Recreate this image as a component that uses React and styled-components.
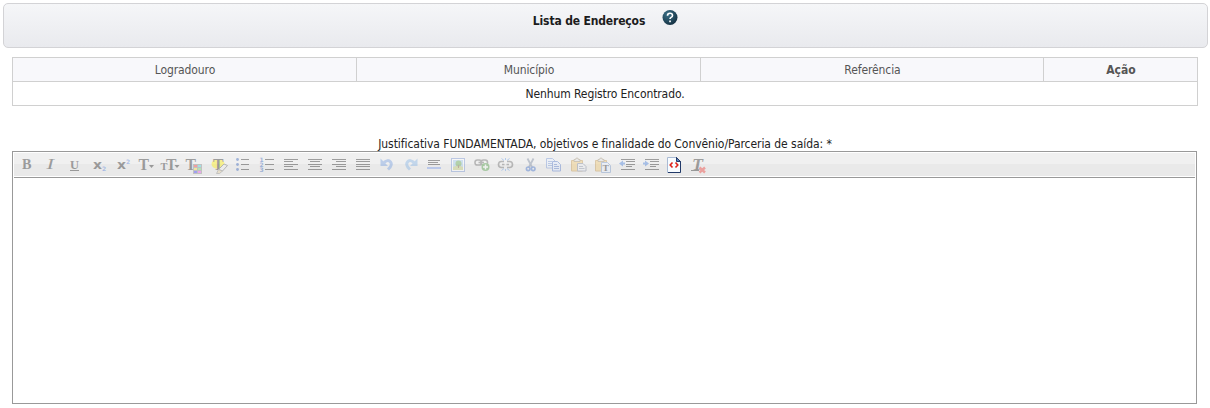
import React from 'react';
import styled, { createGlobalStyle } from 'styled-components';

const GlobalStyle = createGlobalStyle`
  body { margin: 0; background: #fff; }
  * { box-sizing: border-box; }
`;

const Page = styled.main`
  height: 408px;
  padding: 3px 2px 0 3px;
  overflow: hidden;
  font: 12px/14px 'DejaVu Sans Condensed', 'DejaVu Sans', sans-serif;
  font-stretch: condensed;
  color: #222;
`;

const Header = styled.header`
  display: flex;
  justify-content: center;
  align-items: flex-start;
  gap: 17px;
  height: 45px;
  padding-top: 6px;
  border: 1px solid #d3d3d6;
  border-radius: 5px;
  background: linear-gradient(#f5f6f8, #e9eaee);
`;

const Title = styled.h1`
  margin: 4px 0 0;
  font-size: 12px;
  line-height: 14px;
  font-weight: bold;
  letter-spacing: ${(p) => p.$spacing};
  color: #1c1c1c;
  white-space: nowrap;
`;

const Table = styled.table`
  width: 1186px;
  margin: 9px 0 0 9px;
  border-collapse: collapse;
  table-layout: fixed;
`;

const HeadCell = styled.th`
  height: 24px;
  padding: 0 0 0 1px;
  border: 1px solid #d0d0d0;
  background: #f8f8fb;
  color: #555;
  font-weight: ${(p) => (p.$bold ? 'bold' : 'normal')};
  letter-spacing: ${(p) => p.$spacing || 'normal'};
  text-align: center;
`;

const Cell = styled.td`
  height: 24px;
  padding: 0;
  border: 1px solid #d0d0d0;
  text-align: center;
  letter-spacing: ${(p) => p.$spacing};
`;

const Label = styled.label`
  display: block;
  width: 1186px;
  margin: 31px 0 0 9px;
  height: 14px;
  text-align: center;
  letter-spacing: ${(p) => p.$spacing};
  white-space: nowrap;
`;

const Editor = styled.section`
  display: flex;
  flex-direction: column;
  width: 1185px;
  height: 253px;
  margin-left: 9px;
  padding: 1px;
  border: 1px solid #999;
`;

const Toolbar = styled.div`
  display: flex;
  height: 25px;
  padding-bottom: 1px;
  border-bottom: 1px solid #999;
  background: linear-gradient(#f0f0f0 11px, #e9e9e9 11px) content-box;
`;

const Tool = styled.button`
  width: 24px;
  height: 23px;
  padding: 0;
  border: 0;
  background: none;
  opacity: ${(p) => (p.$active ? 1 : 0.4)};
  svg { display: block; overflow: visible; }
`;

const Body = styled.div`
  flex: 1;
`;

const DARK = '#222';
const BLUE = '#4577dc';

const Glyph = ({ x, y, size = 14, width, family = 'Liberation Serif', color = DARK, weight = 'bold', italic, children }) => (
  <text
    x={x}
    y={y}
    fontFamily={family}
    fontSize={size}
    fontWeight={weight}
    fontStyle={italic ? 'italic' : 'normal'}
    textLength={width}
    lengthAdjust="spacingAndGlyphs"
    letterSpacing="0"
    fill={color}
  >
    {children}
  </text>
);

const BigT = ({ x, y = 6 }) => <Glyph x={x} y={y + 11} size={16.5} width={10.5}>T</Glyph>;
const Arrow = ({ x }) => <path d={`M${x} 12h5l-2.500 3z`} fill={DARK} />;
const Bars = ({ rows, color = '#222' }) =>
  rows.map(([x, y, w]) => <rect key={`${x}-${y}`} x={x} y={y} width={w} height="1" fill={color} />);

const Clipboard = () => (
  <g>
    <path d="M5.500 7.500h11v10.500h-11z" fill="#efc56c" stroke="#c09040" />
    <path d="M8 8.500V6.500h1.500q0-1.500 1.500-1.500t1.500 1.500h1.500v2z" fill="#ddd" stroke="#8a7752" strokeWidth=".8" />
  </g>
);

const Chain = () => (
  <g fill="none" stroke="#666" strokeWidth="1.600">
    <rect x="5" y="7" width="6.500" height="5" rx="2.300" />
    <rect x="11" y="7" width="6.500" height="5" rx="2.300" />
    <path d="M8.500 9.500h5.500" />
  </g>
);

const IndentBars = () => (
  <Bars rows={[[7, 6, 14], [12, 8, 9], [12, 11, 9], [12, 13, 6], [7, 16, 14]]} />
);

const tools = [
  ['bold', <Glyph x={8} y={16} width={9.5}>B</Glyph>],
  ['italic', <Glyph x={8.500} y={16} width={7.500} weight="normal" italic>I</Glyph>],
  ['underline', <><Glyph x={8} y={15.500} size={13} width={9}>U</Glyph><rect x="8" y="17" width="9" height="1" fill={DARK} /></>],
  ['subscript', <><Glyph x={7} y={16} size={13} width={9} family="DejaVu Sans">x</Glyph><Glyph x={16} y={18} size={6} family="DejaVu Sans" color={BLUE}>2</Glyph></>],
  ['superscript', <><Glyph x={7} y={16} size={13} width={9} family="DejaVu Sans">x</Glyph><Glyph x={16} y={10.500} size={6} family="DejaVu Sans" color={BLUE}>2</Glyph></>],
  ['font', <><BigT x={4.500} /><Arrow x={15} /></>],
  ['size', <><Glyph x={2.500} y={17} size={11} width={7}>T</Glyph><BigT x={8} /><Arrow x={16.500} /></>],
  ['color', <>
    <BigT x={3.500} />
    <rect x="11" y="11" width="9" height="10" fill="#888" />
    <rect x="12" y="12" width="3" height="2" fill="#f33" /><rect x="16" y="12" width="3" height="2" fill="#3bd3dc" />
    <rect x="12" y="15" width="3" height="2" fill="#fd3" /><rect x="16" y="15" width="3" height="2" fill="#6d6" />
    <rect x="12" y="18" width="3" height="2" fill="#33f" /><rect x="16" y="18" width="3" height="2" fill="#e4e" />
  </>],
  ['highlight', <>
    <ellipse cx="12" cy="11" rx="6.500" ry="5" fill="#ffee00" />
    <BigT x={7} />
    <path d="M12.500 16.500l5.500-5.500 3.500 1.500-5 5.500z" fill="#eee" stroke="#666" />
    <path d="M12.500 16.500l-2 4h3l3-2.500z" fill="#e5cf9c" stroke="#777" strokeWidth=".8" />
  </>],
  ['bullets', <><Bars rows={[[11, 6, 8], [11, 11, 8], [11, 16, 8]]} />{[6.500, 11.500, 16.500].map((y) => <circle key={y} cx="7.500" cy={y} r="1.400" fill="#2a5bb8" />)}</>],
  ['numbers', <><Bars rows={[[11, 6, 9], [11, 11, 9], [11, 16, 9]]} />{['1', '2', '3'].map((n, i) => <Glyph key={n} x={5.500} y={9 + i * 5} size={6} family="DejaVu Sans" color="#2a5bb8">{n}</Glyph>)}</>],
  ['left', <Bars rows={[[6, 6, 14], [6, 8, 9], [6, 11, 14], [6, 13, 9], [6, 16, 14]]} />],
  ['center', <Bars rows={[[6, 6, 14], [8, 8, 10], [6, 11, 14], [8, 13, 10], [6, 16, 14]]} />],
  ['right', <Bars rows={[[6, 6, 14], [10, 8, 10], [6, 11, 14], [10, 13, 10], [6, 16, 14]]} />],
  ['justify', <Bars rows={[6, 8, 11, 13, 16].map((y) => [6, y, 14])} />],
  ['undo', <><path d="M10 9.500q4-3.500 6.500-.5t-2.500 7.500" fill="none" stroke="#6f9be0" strokeWidth="3" /><path d="M6.500 5.500v7.500h7.500z" fill="#6f9be0" /></>],
  ['redo', <><path d="M16 9.500q-4-3.500-6.500-.5t2.500 7.500" fill="none" stroke="#7fb0e6" strokeWidth="3" /><path d="M19.500 5.500v7.500h-7.500z" fill="#7fb0e6" /></>],
  ['rule', <><Bars rows={[[6, 7, 12], [6, 9, 10], [6, 11, 12]]} /><rect x="5" y="14" width="14" height="2" fill="#7599ea" /></>],
  ['image', <>
    <rect x="5.500" y="5.500" width="13" height="13" fill="#fff" stroke="#6f8fd0" />
    <rect x="7" y="7" width="10" height="10" fill="#9ec9ee" />
    <path d="M7 14q5-3 10 0v3H7z" fill="#bcc86d" />
    <circle cx="12.500" cy="10.500" r="3" fill="#59a343" /><path d="M12 12h1v3h-1z" fill="#7b5a32" />
  </>],
  ['link', <><Chain /><circle cx="15.500" cy="14" r="4" fill="#45983a" /><path d="M15.500 11.500v5M13 14h5" stroke="#fff" strokeWidth="1.500" /></>],
  ['unlink', <>
    <path d="M10 8.500H7.500a3 3 0 0 0 0 6H10M13 8.500h2.500a3 3 0 0 1 0 6H13M8 11.500h2.500M12.500 11.500H15" fill="none" stroke="#666" strokeWidth="1.600" />
    <path d="M7.500 5.500l2.500 2M15.500 5.500l-2.500 2M7.500 17.500l2.500-2M15.500 17.500l-2.500-2M11.500 5v2M11.500 16v2" stroke="#5a96e8" />
  </>],
  ['cut', <>
    <path d="M9.500 5.500l5 9.500M15.500 5.500l-5 9.500" stroke="#74839b" strokeWidth="1.800" />
    <circle cx="10.200" cy="15.800" r="1.800" fill="none" stroke="#3668c8" strokeWidth="1.600" /><circle cx="15.200" cy="15.800" r="1.800" fill="none" stroke="#3668c8" strokeWidth="1.600" />
  </>],
  ['copy', <>
    <path d="M4.500 5.500h6l3 3v6.500h-9z" fill="#e8f1ff" stroke="#6e90d6" /><path d="M6 8.500h4M6 10.500h5M6 12.500h5" stroke="#6e90d6" />
    <path d="M10.500 8.500h5l3 3v6.500h-8z" fill="#dbe8ff" stroke="#4a72c8" /><path d="M12 11.500h3M12 13.500h5M12 15.500h5" stroke="#4a72c8" />
  </>],
  ['paste', <><Clipboard /><path d="M11.500 10.500h5.500l3 3v4.500h-8.500z" fill="#edf0f5" stroke="#777f94" /><path d="M13 13.500h4M13 15.500h5.500" stroke="#8a93a8" /></>],
  ['pastetext', <><Clipboard /><path d="M11.500 9.500h6l3 3v7h-9z" fill="#e6efff" stroke="#6e90c6" /><Glyph x={12.500} y={18} size={9} width={6.500}>T</Glyph></>],
  ['outdent', <><IndentBars /><path d="M5 10.500l4-3v2h2v2H9v2z" fill="#3c78d8" /></>],
  ['indent', <><IndentBars /><path d="M11 10.500l-4-3v2H5v2h2v2z" fill="#3c78d8" /></>],
  ['source', <>
    <path d="M5.500 4.500h9l4 4v11h-13z" fill="#f8fcff" stroke="#a9bad4" />
    <path d="M14 4.500h.5l4 4v11H6" fill="none" stroke="#223a69" /><path d="M14.500 4.500v4h4z" fill="#5b7fb9" stroke="#223a69" />
    <path d="M10.500 9.500l-2.300 2.500 2.300 2.500M13.500 9.500l2.300 2.500-2.300 2.500" fill="none" stroke="#e0231b" strokeWidth="1.600" />
  </>],
  ['clear', <><Glyph x={6} y={16.500} size={16} width={11} italic>T</Glyph><path d="M5 17.500h8" stroke={DARK} /><path d="M13.500 14.500l5.500 5M19 14.500l-5.500 5" stroke="#f0352d" strokeWidth="2.400" /></>],
];

const HelpIcon = () => (
  <svg width="16" height="16" viewBox="0 0 16 16" role="img" aria-label="Ajuda">
    <defs>
      <radialGradient id="help" cx=".35" cy=".3" r=".8">
        <stop offset="0" stopColor="#3a7188" />
        <stop offset="1" stopColor="#122c3d" />
      </radialGradient>
    </defs>
    <circle cx="8" cy="7.500" r="7.500" fill="url(#help)" />
    <path d="M5.500 5.700q0-2.400 2.500-2.400t2.500 2.100q0 1.200-1.400 2Q8 8 8 9.100" fill="none" stroke="#fff" strokeWidth="1.600" />
    <rect x="7.200" y="10.500" width="1.700" height="1.700" fill="#fff" />
  </svg>
);

export default function App() {
  return (
    <Page>
      <GlobalStyle />
      <Header>
        <Title $spacing="-0.15px">Lista de Endereços</Title>
        <HelpIcon />
      </Header>
      <Table>
        <colgroup>
          <col style={{ width: 344 }} />
          <col style={{ width: 344 }} />
          <col style={{ width: 343 }} />
          <col style={{ width: 154 }} />
        </colgroup>
        <thead>
          <tr>
            <HeadCell $spacing="-0.1px">Logradouro</HeadCell>
            <HeadCell $spacing="-0.1px">Município</HeadCell>
            <HeadCell $spacing="-0.1px">Referência</HeadCell>
            <HeadCell $bold>Ação</HeadCell>
          </tr>
        </thead>
        <tbody>
          <tr>
            <Cell colSpan={4} $spacing="-0.1px">Nenhum Registro Encontrado.</Cell>
          </tr>
        </tbody>
      </Table>
      <Label $spacing="-0.055px">Justificativa FUNDAMENTADA, objetivos e finalidade do Convênio/Parceria de saída: *</Label>
      <Editor>
        <Toolbar>
          {tools.map(([name, icon]) => (
            <Tool key={name} type="button" aria-label={name} $active={name === 'source'}>
              <svg width="24" height="23" viewBox="0 0 24 23">{icon}</svg>
            </Tool>
          ))}
        </Toolbar>
        <Body contentEditable suppressContentEditableWarning />
      </Editor>
    </Page>
  );
}
